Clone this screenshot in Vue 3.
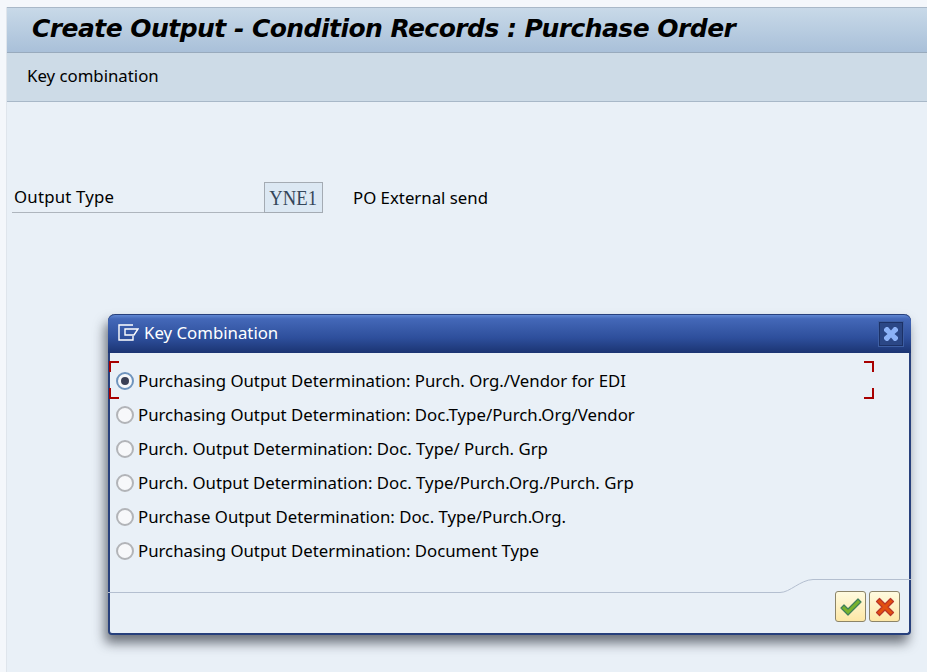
<script setup>
const options = [
  'Purchasing Output Determination: Purch. Org./Vendor for EDI',
  'Purchasing Output Determination: Doc.Type/Purch.Org/Vendor',
  'Purch. Output Determination: Doc. Type/ Purch. Grp',
  'Purch. Output Determination: Doc. Type/Purch.Org./Purch. Grp',
  'Purchase Output Determination: Doc. Type/Purch.Org.',
  'Purchasing Output Determination: Document Type'
];
</script>

<template>
  <div class="page">
    <div class="screen">
      <div class="title-bar">
        <h1>Create Output - Condition Records : Purchase Order</h1>
      </div>
      <div class="toolbar"><span>Key combination</span></div>

      <div class="field-row">
        <span class="field-label">Output Type</span>
        <span class="field-value"><span>YNE1</span></span>
        <span class="field-desc">PO External send</span>
      </div>
    </div>

    <!-- popup window -->
    <div class="dialog">
      <div class="dialog-head">
        <svg class="head-icon" width="21" height="17" viewBox="0 0 21 17" fill="none" stroke="#fff" stroke-width="1.4">
          <path d="M15 1H1V16H15V12" />
          <path d="M7 5H20L16 11H7Z" />
        </svg>
        <span class="dialog-title">Key Combination</span>
        <div class="close-btn">
          <svg width="16" height="16" viewBox="0 0 16 16">
            <path d="M1 3L3 1H5L8 4.5L11 1H13L15 3V5L11.5 8L15 11V13L13 15H11L8 11.5L5 15H3L1 13V11L4.5 8L1 5Z" fill="#8cb2f7" />
          </svg>
        </div>
      </div>

      <div class="dialog-body">
        <div class="focus-box">
          <i class="corner tl"></i><i class="corner bl"></i><i class="corner tr"></i><i class="corner br"></i>
        </div>
        <div v-for="(opt, i) in options" :key="opt" class="option">
          <span class="radio" :class="{ on: i === 0 }"></span>
          <span class="option-text">{{ opt }}</span>
        </div>
      </div>

      <div class="dialog-foot">
        <svg class="foot-line" width="803" height="16" viewBox="0 0 803 16" fill="none" stroke="#b4bfd0">
          <path d="M0 14.5H672C682 14.5 692 2 705 1.5H803" />
        </svg>
        <div class="foot-btns">
          <button class="btn">
            <svg width="24" height="22" viewBox="0 0 24 22">
              <path d="M2 12L5 9L9 13L19 3L22 6L9 19Z" fill="#7ab32c" stroke="#3f7f5a" stroke-width="1.2" stroke-linejoin="round" />
            </svg>
          </button>
          <button class="btn">
            <svg width="20" height="20" viewBox="0 0 20 20">
              <path d="M1.5 4.5L4.5 1.5L10 7L15.5 1.5L18.5 4.5L13 10L18.5 15.5L15.5 18.5L10 13L4.5 18.5L1.5 15.5L7 10Z" fill="#e2500f" stroke="#b8342a" stroke-width="1.2" stroke-linejoin="round" />
            </svg>
          </button>
        </div>
      </div>
    </div>
  </div>
</template>

<style>
body {
  margin: 0;
  background: #f4f7fb;
}
</style>

<style scoped>
.page {
  position: relative;
  width: 927px;
  height: 672px;
  overflow: hidden;
  box-sizing: border-box;
  padding: 7px 0 0 6px;
  font-family: "Noto Sans", "Open Sans", sans-serif;
  font-size: 16.8px;
  color: #000;
}

.screen {
  height: 100%;
  background: #e9f0f7;
  border-left: 1px solid #dfe5ec;
}

.title-bar {
  height: 46px;
  box-sizing: border-box;
  padding: 0 0 3px 25px;
  display: flex;
  align-items: center;
  border-top: 1px solid #a9b8c8;
  border-bottom: 1px solid #98aabd;
  background: linear-gradient(#c8d9e8, #a9c0d9);
}

h1 {
  margin: 0;
  font-family: "DejaVu Sans", sans-serif;
  font-size: 25px;
  font-weight: 700;
  font-style: italic;
  letter-spacing: -0.54px;
  white-space: nowrap;
}

.toolbar {
  height: 49px;
  box-sizing: border-box;
  padding: 0 0 3px 20px;
  display: flex;
  align-items: center;
  background: #cddbe7;
  border-bottom: 1px solid #a8b8c8;
}

.field-row {
  display: flex;
  align-items: center;
  height: 31px;
  margin: 80px 0 0 5px;
}

.field-label {
  width: 252px;
  height: 31px;
  line-height: 30px;
  padding-left: 2px;
  box-sizing: border-box;
  letter-spacing: 0.2px;
  border-bottom: 1px solid #aeb5bd;
}

.field-value {
  width: 59px;
  height: 31px;
  box-sizing: border-box;
  text-align: center;
  line-height: 29px;
  font-family: "Liberation Serif", serif;
  font-size: 22px;
  color: #34465a;
  background: #dce8f3;
  border: 1px solid #a4abb3;
}

.field-value span {
  display: inline-block;
  transform: scaleX(0.85);
}

.field-desc {
  margin-left: 30px;
}

.dialog {
  position: absolute;
  left: 108px;
  top: 314px;
  width: 803px;
  height: 321px;
  box-sizing: border-box;
  display: flex;
  flex-direction: column;
  background: #e9f0f7;
  border: 2px solid #27407c;
  border-top: none;
  border-radius: 7px 7px 4px 4px;
  box-shadow: -3px 8px 12px rgba(40, 45, 55, 0.65);
}

.dialog-head {
  height: 39px;
  margin: 0 -2px;
  flex-shrink: 0;
  display: flex;
  align-items: center;
  padding: 0 8px 0 10px;
  border-radius: 7px 7px 0 0;
  border-top: 1px solid #27407c;
  box-sizing: border-box;
  background: linear-gradient(#5f86d2 0, #4468b8 10%, #2e4f9c 60%, #1b3472 100%);
  color: #fff;
}

.head-icon {
  margin: -4px 5px 0 0;
}

.dialog-title {
  flex: 1;
  margin-top: -4px;
}

.close-btn {
  width: 24px;
  height: 24px;
  box-sizing: border-box;
  display: flex;
  align-items: center;
  justify-content: center;
  background: #2b4786;
  border: 1px solid #1c3166;
  outline: 1px solid #3d5ea3;
}

.dialog-body {
  position: relative;
  flex: 1;
  padding-top: 11px;
}

.focus-box {
  position: absolute;
  left: -1px;
  top: 8px;
  width: 765px;
  height: 38px;
}

.corner {
  position: absolute;
  width: 8px;
  height: 9px;
  border: 0 solid #a80000;
}
.tl { left: 0; top: 0; border-width: 2px 0 0 2px; }
.bl { left: 0; bottom: 0; border-width: 0 0 2px 2px; }
.tr { right: 0; top: 0; border-width: 2px 2px 0 0; }
.br { right: 0; bottom: 0; border-width: 0 2px 2px 0; }

.option {
  height: 34px;
  display: flex;
  align-items: center;
  padding-left: 6px;
  white-space: nowrap;
}

.option-text {
  padding-bottom: 2px;
}

.radio {
  width: 18px;
  height: 18px;
  margin-right: 4px;
  box-sizing: border-box;
  border-radius: 50%;
  border: 2px solid #b2b4b8;
  background: #f7f8fa;
  display: flex;
  align-items: center;
  justify-content: center;
}

.radio.on {
  border-color: #6f94bd;
}

.radio.on::after {
  content: "";
  width: 8px;
  height: 8px;
  border-radius: 50%;
  background: #3a3f55;
}

.dialog-foot {
  position: relative;
  height: 55px;
  flex-shrink: 0;
}

.foot-line {
  position: absolute;
  left: -2px;
  top: 0;
}

.foot-btns {
  position: absolute;
  right: 9px;
  top: 13px;
  display: flex;
  gap: 3px;
}

.btn {
  width: 31px;
  height: 31px;
  padding: 0;
  display: flex;
  align-items: center;
  justify-content: center;
  background: linear-gradient(#fffbe0, #fde7a6);
  border: 1px solid #8c8468;
  border-radius: 3px;
}
</style>
